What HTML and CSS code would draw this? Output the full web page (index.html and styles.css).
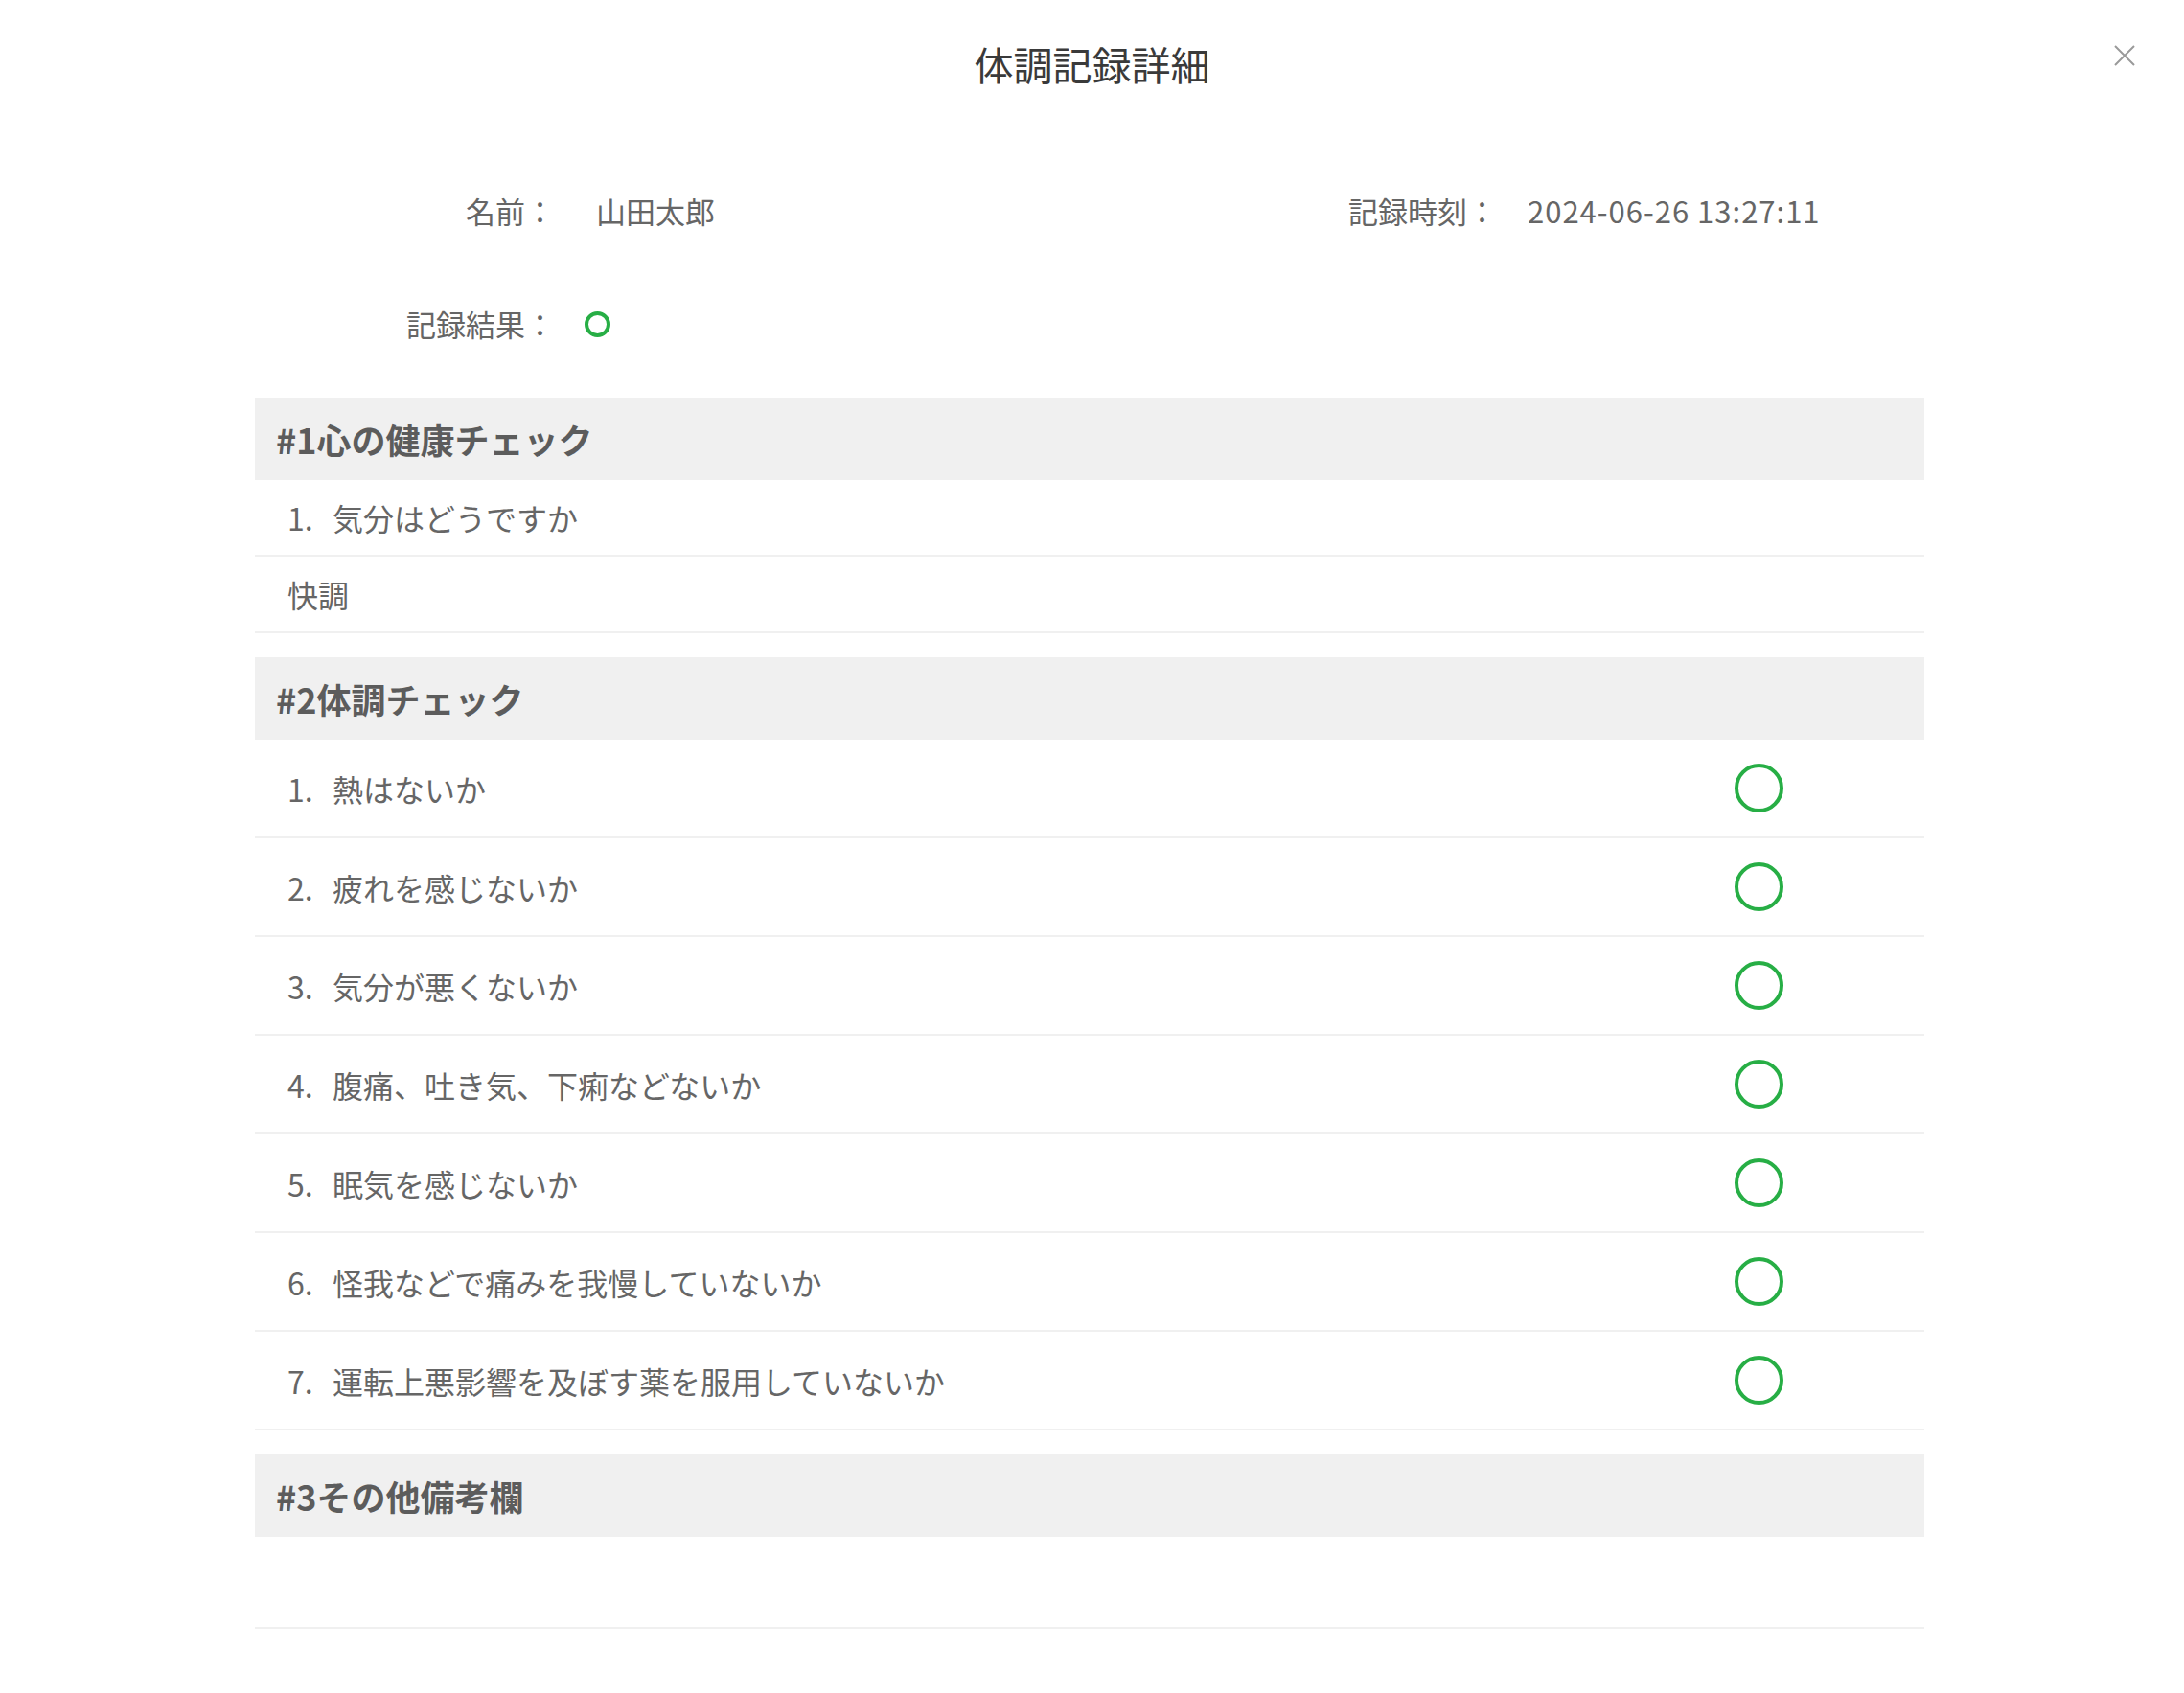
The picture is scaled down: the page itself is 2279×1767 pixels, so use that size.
FILE: index.html
```html
<!DOCTYPE html>
<html lang="ja">
    <head>
        <meta charset="utf-8">
        <title>体調記録詳細</title>
        <link rel="stylesheet" href="styles.css">
    </head>
    <body>
        <div class="dialog">
            <div class="dialog-header">
                <h1 class="dialog-title">体調記録詳細</h1>
                <button class="dialog-close" aria-label="閉じる">
                    <svg viewBox="0 0 24 24" width="24" height="24">
                        <path d="M2 2 L22 22 M22 2 L2 22" stroke="#9a9a9a" stroke-width="2" fill="none" />
                    </svg>
                </button>
            </div>

            <div class="dialog-body">
                <div class="info">
                    <div class="info-item">
                        <span class="info-label">名前：</span>
                        <span class="info-value name-value">山田太郎</span>
                    </div>
                    <div class="info-item">
                        <span class="info-label">記録時刻：</span>
                        <span class="info-value time-value">2024-06-26 13:27:11</span>
                    </div>
                    <div class="info-item">
                        <span class="info-label">記録結果：</span>
                        <span class="info-value result-value"><span class="mark mark-small"></span></span>
                    </div>
                </div>

                <!-- #1 -->
                <div class="section">
                    <div class="section-title">#1心の健康チェック</div>
                    <div class="row">
                        <span class="num">1.</span><span class="text">気分はどうですか</span>
                    </div>
                    <div class="row">
                        <span class="text">快調</span>
                    </div>
                </div>

                <!-- #2 -->
                <div class="section">
                    <div class="section-title">#2体調チェック</div>
                    <div class="row row-check">
                        <div><span class="num">1.</span><span class="text">熱はないか</span></div>
                        <span class="mark"></span>
                    </div>
                    <div class="row row-check">
                        <div><span class="num">2.</span><span class="text">疲れを感じないか</span></div>
                        <span class="mark"></span>
                    </div>
                    <div class="row row-check">
                        <div><span class="num">3.</span><span class="text">気分が悪くないか</span></div>
                        <span class="mark"></span>
                    </div>
                    <div class="row row-check">
                        <div><span class="num">4.</span><span class="text">腹痛、吐き気、下痢などないか</span></div>
                        <span class="mark"></span>
                    </div>
                    <div class="row row-check">
                        <div><span class="num">5.</span><span class="text">眠気を感じないか</span></div>
                        <span class="mark"></span>
                    </div>
                    <div class="row row-check">
                        <div><span class="num">6.</span><span class="text">怪我などで痛みを我慢していないか</span></div>
                        <span class="mark"></span>
                    </div>
                    <div class="row row-check">
                        <div><span class="num">7.</span><span class="text">運転上悪影響を及ぼす薬を服用していないか</span></div>
                        <span class="mark"></span>
                    </div>
                </div>

                <!-- #3 -->
                <div class="section">
                    <div class="section-title">#3その他備考欄</div>
                    <div class="row row-empty"></div>
                </div>
            </div>
        </div>
    </body>
</html>
```

FILE: styles.css
```css
* {
    margin: 0;
    padding: 0;
    box-sizing: border-box;
}

body {
    background: #fff;
    font-family: "Noto Sans CJK JP", "Noto Sans", sans-serif;
    color: #666;
}

.dialog {
    width: 100%;
    position: relative;
}

.dialog-header {
    padding-top: 36px;
    text-align: center;
}

.dialog-title {
    font-size: 41px;
    line-height: 60px;
    font-weight: 400;
    color: #3a3a3a;
}

.dialog-close {
    position: absolute;
    top: 46px;
    right: 50px;
    width: 24px;
    height: 24px;
    border: none;
    background: none;
    cursor: pointer;
}

.dialog-close svg {
    display: block;
}

.dialog-body {
    width: 1742px;
    margin-left: 266px;
    padding-bottom: 40px;
}

/* top info */
.info {
    margin-top: 100px;
    padding-left: 113px;
    display: grid;
    grid-template-columns: 983px auto;
    row-gap: 70px;
    font-size: 31px;
    line-height: 48px;
}

.info-item {
    display: flex;
    align-items: center;
}

.info-label {
    width: 200px;
    text-align: right;
}

.info-value {
    margin-left: 43px;
}

.time-value {
    margin-left: 32px;
    letter-spacing: 1px;
}

.result-value {
    margin-left: 31px;
    display: flex;
    align-items: center;
}

/* sections */
.section {
    margin-top: 53px;
}

.section + .section {
    margin-top: 25px;
}

.section-title {
    height: 86px;
    display: flex;
    align-items: center;
    padding-left: 22px;
    background: #f0f0f0;
    font-size: 36px;
    font-weight: 700;
    color: #5c5c5c;
}

.row {
    height: 80px;
    display: flex;
    align-items: center;
    padding-left: 34px;
    border-bottom: 2px solid #f0f0f0;
    font-size: 32px;
}

.row-check {
    height: 103px;
    justify-content: space-between;
    padding-right: 147px;
}

.row-empty {
    height: 96px;
}

.num {
    display: inline-block;
    width: 47px;
}

/* green ok mark */
.mark {
    display: block;
    width: 51px;
    height: 51px;
    border: 4px solid #27ae45;
    border-radius: 50%;
}

.mark-small {
    width: 27px;
    height: 27px;
    border-width: 4px;
}
```
